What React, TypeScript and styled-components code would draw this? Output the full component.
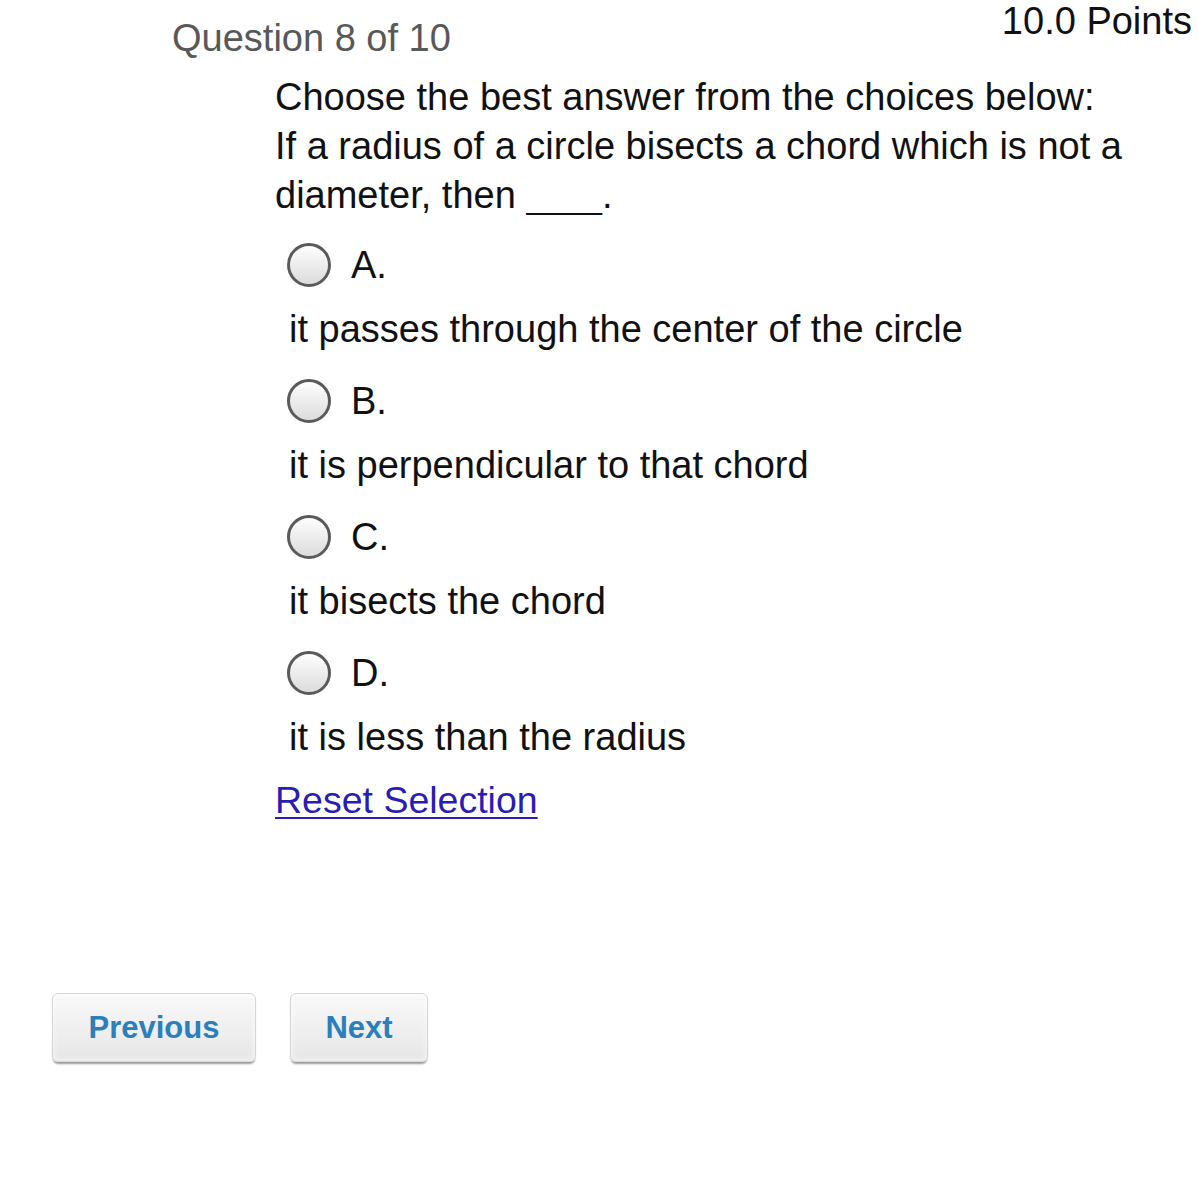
import styled, { createGlobalStyle } from 'styled-components';

const GlobalStyle = createGlobalStyle`
  body {
    margin: 0;
    background: #fff;
    font-family: 'Liberation Sans', Arial, Helvetica, sans-serif;
    color: #111;
  }
`;

const Page = styled.div`
  width: 1198px;
  height: 1200px;
  overflow: hidden;
  box-sizing: border-box;
`;

const Header = styled.div`
  display: flex;
  justify-content: space-between;
  align-items: flex-start;
  padding-left: 172px;
  padding-right: 6px;
`;

const QuestionCount = styled.div`
  font-size: 38px;
  line-height: 42px;
  margin-top: 17px;
  color: #585858;
`;

const Points = styled.div`
  font-size: 38px;
  line-height: 42px;
  color: #111;
`;

const Body = styled.div`
  padding-left: 275px;
  margin-top: 14px;
`;

const Prompt = styled.div`
  width: 880px;
  font-size: 38px;
  line-height: 49px;
`;

const Blank = styled.span`
  display: inline-block;
  font-size: 34px;
  line-height: 34px;
`;

const Options = styled.div`
  display: flex;
  flex-direction: column;
  gap: 25px;
  margin-top: 23px;
  margin-left: 12px;
`;

const Option = styled.div`
  display: flex;
  flex-direction: column;
`;

const RadioRow = styled.label`
  display: flex;
  align-items: center;
  gap: 20px;
  height: 44px;
  font-size: 38px;
`;

const Radio = styled.span`
  width: 44px;
  height: 44px;
  box-sizing: border-box;
  border-radius: 50%;
  border: 3px solid #5a5a5a;
  background: linear-gradient(#fdfdfd, #dcdcdc);
  flex-shrink: 0;
`;

const Answer = styled.div`
  margin-top: 18px;
  margin-left: 2px;
  font-size: 38px;
  line-height: 49px;
`;

const ResetLink = styled.a`
  display: inline-block;
  margin-top: 14px;
  font-size: 37.5px;
  line-height: 49px;
  color: #2a1db3;
  text-decoration: underline;
  text-decoration-thickness: 2px;
  text-underline-offset: 4px;
  cursor: pointer;
`;

const Nav = styled.div`
  display: flex;
  gap: 34px;
  padding-left: 52px;
  margin-top: 168px;
`;

const NavButton = styled.button<{ $width: number }>`
  width: ${(p) => p.$width}px;
  height: 69px;
  border: 1px solid #d6d6d6;
  border-radius: 6px;
  background: linear-gradient(#f9f9f9, #e6e6e6);
  box-shadow: 0 3px 2px -1px #9a9a9a, inset 0 0 6px rgba(255, 255, 255, 0.8);
  font-family: 'Liberation Sans', Arial, sans-serif;
  font-weight: bold;
  font-size: 31px;
  color: #2b80bb;
  padding: 0;
  cursor: pointer;
`;

const choices = [
  { key: 'A.', text: 'it passes through the center of the circle' },
  { key: 'B.', text: 'it is perpendicular to that chord' },
  { key: 'C.', text: 'it bisects the chord' },
  { key: 'D.', text: 'it is less than the radius' },
];

export default function App() {
  return (
    <>
      <GlobalStyle />
      <Page>
        <Header>
          <QuestionCount>Question 8 of 10</QuestionCount>
          <Points>10.0 Points</Points>
        </Header>
        <Body>
          <Prompt>
            Choose the best answer from the choices below:
            <br />
            If a radius of a circle bisects a chord which is not a diameter, then <Blank>____</Blank>.
          </Prompt>
          <Options>
            {choices.map((c) => (
              <Option key={c.key}>
                <RadioRow>
                  <Radio />
                  {c.key}
                </RadioRow>
                <Answer>{c.text}</Answer>
              </Option>
            ))}
          </Options>
          <ResetLink>Reset Selection</ResetLink>
        </Body>
        <Nav>
          <NavButton $width={204}>Previous</NavButton>
          <NavButton $width={138}>Next</NavButton>
        </Nav>
      </Page>
    </>
  );
}
